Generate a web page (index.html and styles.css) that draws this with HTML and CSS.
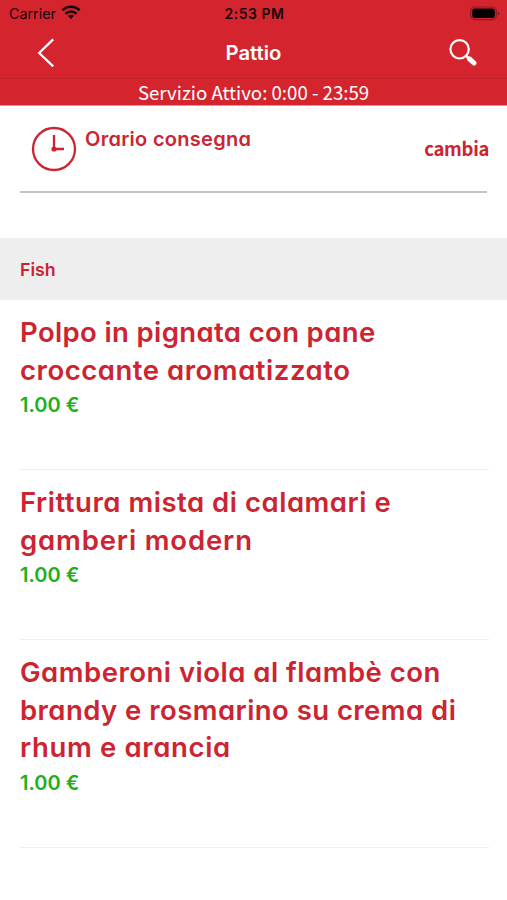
FILE: index.html
```html
<!DOCTYPE html>
<html lang="it">
<head>
<meta charset="utf-8">
<title>Pattio</title>
<link rel="stylesheet" href="styles.css">
</head>
<body>
<header class="top">
  <div class="status">
    <div class="carrier"><span class="carrier-name">Carrier</span>
      <svg width="20" height="15" viewBox="0 0 20 15"><g fill="none" stroke="#18070a" stroke-width="2.6"><path d="M1.4 5.2C6.2.5 13.8.5 18.6 5.2"/><path d="M4.5 8.7c3.1-2.9 7.9-2.9 11 0"/></g><path d="M6.9 10.8c1.8-1.5 4.4-1.5 6.2 0L10 14z" fill="#18070a"/></svg>
    </div>
    <span class="clock">2:53 PM</span>
    <svg class="battery" width="30" height="15" viewBox="0 0 30 15"><rect x=".7" y="1" width="25.6" height="12.6" rx="4" fill="none" stroke="#8d1821" stroke-width="1.2"/><rect x="2.2" y="2.5" width="22.6" height="9.6" rx="2.4"/><path d="M27.8 5.4v3.8c1.7-.5 1.7-3.3 0-3.8z" fill="#74131a"/></svg>
  </div>
  <nav class="nav">
    <svg class="back" width="18" height="32" viewBox="0 0 18 32"><path d="M16.2 2.4 2.2 16l14 13.4" fill="none" stroke="#fff" stroke-width="2.2"/></svg>
    <h1 class="title">Pattio</h1>
    <svg class="search" width="30" height="30" viewBox="0 0 30 30"><circle cx="11.6" cy="11.3" r="9.2" fill="none" stroke="#fff" stroke-width="2.2"/><path d="m18.2 17.8 3.4 3.5" stroke="#fff" stroke-width="2.4"/><path d="m21.4 20.8 4.6 4.2" stroke="#fff" stroke-width="5" stroke-linecap="round"/></svg>
  </nav>
  <div class="service"><span class="service-text">Servizio Attivo: 0:00 - 23:59</span></div>
</header>
<section class="delivery">
  <svg class="dial" width="46" height="46" viewBox="0 0 46 46"><g fill="none" stroke="#cc2430"><circle cx="23" cy="23" r="21" stroke-width="2.3"/><path d="M23 9v14h10" stroke-width="2.3"/></g><circle cx="23" cy="23" r="2.6" fill="#cc2430"/></svg>
  <span class="delivery-label">Orario consegna</span>
  <span class="change">cambia</span>
</section>
<h2 class="category"><span>Fish</span></h2>
<main class="menu">
  <article class="dish">
    <h3 class="name"><span class="l1">Polpo in pignata con pane</span><br><span class="l2">croccante aromatizzato</span></h3>
    <p class="price">1.00 €</p>
  </article>
  <article class="dish">
    <h3 class="name"><span class="l3">Frittura mista di calamari e</span><br><span class="l4">gamberi modern</span></h3>
    <p class="price">1.00 €</p>
  </article>
  <article class="dish tall">
    <h3 class="name"><span class="l5">Gamberoni viola al flambè con</span><br><span class="l6">brandy e rosmarino su crema di</span><br><span class="l7">rhum e arancia</span></h3>
    <p class="price">1.00 €</p>
  </article>
</main>
</body>
</html>
```
FILE: styles.css
```css
* { box-sizing: border-box; }
body { margin: 0; height: 900px; overflow: hidden; background: #fff; color: #cc2430; font-family: Inter, sans-serif; }
h1, h2, h3, p { margin: 0; }
svg { display: block; flex: none; }
.top { height: 106px; background: #d4252f; border-bottom: 1px solid #fb8b91; }
.status { height: 27px; display: grid; grid-template-columns: 1fr auto 1fr; align-items: center; padding: 0 7px 0 9px; color: #18070a; }
.carrier { display: flex; gap: 5px; align-items: center; font-size: 14.3px; }
.carrier svg { margin-top: -2px; }
.clock { font-size: 14px; font-weight: 600; letter-spacing: .5px; }
.battery { justify-self: end; }
.nav { height: 52px; display: grid; grid-template-columns: 1fr auto 1fr; align-items: center; padding: 0 29px 0 37px; border-bottom: 1px solid #c3222c; }
.title { color: #fff; font-size: 20.3px; font-weight: 600; margin: -1px 7px 0 0; }
.title { margin-left: -1px; }
.search { justify-self: end; }
.service { height: 26px; color: #fff; font: 18.65px/26px "Noto Sans CJK JP", sans-serif; text-align: center; }
.delivery { height: 87px; margin: 0 20px; padding: 20px 0 0 11px; border-bottom: 2px solid #c4c4c4; display: flex; }
.delivery-label { margin: 0 0 0 8px; font: 600 20px/26px Inter, sans-serif; font-feature-settings: "cv11"; letter-spacing: .28px; white-space: nowrap; }
.change { margin: 7px -2px 0 auto; font: 700 18.5px/30px "Noto Sans CJK JP", sans-serif; letter-spacing: -.35px; }
.category { margin-top: 45px; height: 62px; padding-left: 20px; background: #eee; font-size: 17.8px; line-height: 63px; font-weight: 600; }
.menu { padding: 0 18px 0 20px; }
.dish { height: 170px; padding-top: 14px; border-bottom: 1px solid #eee; }
.tall { height: 208px; }
.name { font-size: 27.5px; line-height: 37.5px; font-weight: 600; font-feature-settings: "cv11"; white-space: nowrap; }
.l1 { letter-spacing: .37px; }
.l2 { letter-spacing: .53px; }
.l3 { letter-spacing: .52px; }
.l4 { letter-spacing: .86px; }
.l5 { letter-spacing: .5px; }
.l6 { letter-spacing: .45px; }
.l7 { letter-spacing: .65px; }
.price { color: #1db019; font-size: 20px; line-height: 32px; font-weight: 600; }
```
